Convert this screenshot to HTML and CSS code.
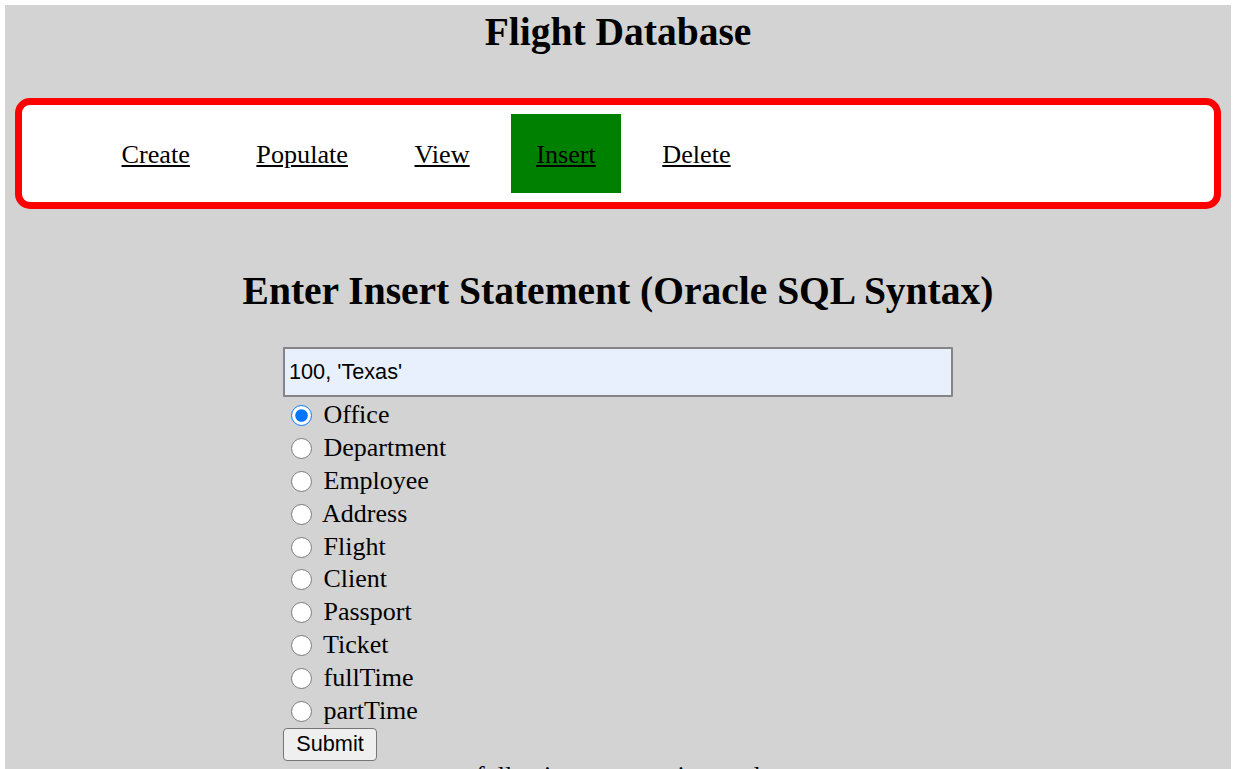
FILE: index.html
```html
<!DOCTYPE html>
<html lang="en">
<head>
<meta charset="utf-8">
<title>Flight Database</title>
<link rel="stylesheet" href="styles.css">
</head>
<body>
<h1 class="title">Flight Database</h1>
<nav class="topnav">
  <ul class="menu">
    <li><a class="menu-link" href="#">Create</a></li>
    <li><a class="menu-link" href="#">Populate</a></li>
    <li><a class="menu-link" href="#">View</a></li>
    <li><a class="menu-link active" href="#">Insert</a></li>
    <li><a class="menu-link" href="#">Delete</a></li>
  </ul>
</nav>
<h2 class="heading">Enter Insert Statement (Oracle SQL Syntax)</h2>
<form class="insert-form">
  <input class="stmt" type="text" value="100, 'Texas'">
  <div class="options">
    <label class="opt"><input class="radio" type="radio" name="tbl" checked> Office</label>
    <label class="opt"><input class="radio" type="radio" name="tbl"> Department</label>
    <label class="opt"><input class="radio" type="radio" name="tbl"> Employee</label>
    <label class="opt"><input class="radio" type="radio" name="tbl"> Address</label>
    <label class="opt"><input class="radio" type="radio" name="tbl"> Flight</label>
    <label class="opt"><input class="radio" type="radio" name="tbl"> Client</label>
    <label class="opt"><input class="radio" type="radio" name="tbl"> Passport</label>
    <label class="opt"><input class="radio" type="radio" name="tbl"> Ticket</label>
    <label class="opt"><input class="radio" type="radio" name="tbl"> fullTime</label>
    <label class="opt"><input class="radio" type="radio" name="tbl"> partTime</label>
  </div>
  <button class="submit" type="button">Submit</button>
</form>
<p class="result">following row was inserted</p>
</body>
</html>
```
FILE: styles.css
```css
html {
  background: #ffffff;
  overflow: hidden;
}

body {
  margin: 5px 2px 0 5px;
  background: #d3d3d3;
  font-family: "Liberation Serif", "Times New Roman", serif;
  color: #000;
  min-height: 800px;
}

.title {
  margin: 0;
  padding-top: 5px;
  font-size: 39.5px;
  line-height: 45px;
  font-weight: bold;
  text-align: center;
}

.topnav {
  margin: 43px 10px 0 10px;
  background: #ffffff;
  border: 7px solid #ff0000;
  border-radius: 15px;
}

.menu {
  list-style: none;
  margin: 0;
  padding: 9px 0 9px 74px;
  display: flex;
  align-items: center;
  gap: 15.5px;
}

.menu-link {
  display: block;
  padding: 25.5px 25.5px 23.5px 25.5px;
  font-size: 26.2px;
  line-height: 30px;
  color: #000;
  text-decoration: underline;
}

.menu-link.active {
  background: #008000;
}

.heading {
  margin: 60px 0 0 0;
  font-size: 39.5px;
  line-height: 45px;
  font-weight: bold;
  text-align: center;
}

.insert-form {
  width: 670px;
  margin: 33px auto 0 auto;
}

.stmt {
  display: block;
  box-sizing: border-box;
  width: 670px;
  height: 50px;
  margin: 0;
  padding: 0 4px;
  border: 2px solid #858585;
  border-radius: 1px;
  background: #e8f0fe;
  font-family: "Liberation Sans", Arial, sans-serif;
  font-size: 21.7px;
  color: #000;
}

.options {
  margin-top: 2px;
}

.opt {
  display: block;
  font-size: 26px;
  line-height: 32.9px;
  height: 32.9px;
}

.radio {
  width: 21px;
  height: 21px;
  margin: 5px 5px 0 8px;
  vertical-align: -3px;
}

.submit {
  display: block;
  box-sizing: border-box;
  width: 94px;
  height: 33px;
  margin: 0;
  padding: 0;
  background: #efefef;
  border: 1.5px solid #767676;
  border-radius: 4px;
  font-family: "Liberation Sans", Arial, sans-serif;
  font-size: 21.7px;
  color: #000;
}

.result {
  margin: 0;
  font-size: 26px;
  line-height: 30px;
  text-align: center;
}
```
